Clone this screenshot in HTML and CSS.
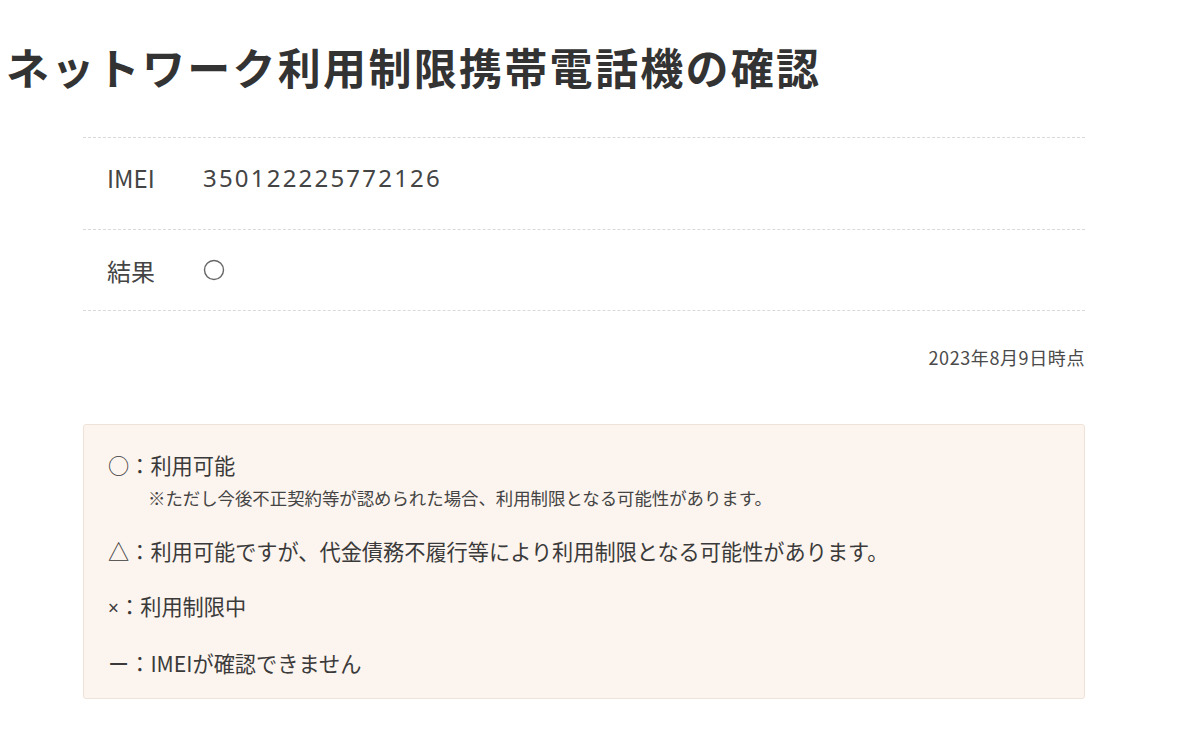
FILE: index.html
```html
<!DOCTYPE html>
<html lang="ja">
<head>
<meta charset="utf-8">
<title>ネットワーク利用制限携帯電話機の確認</title>
<link rel="stylesheet" href="styles.css">
</head>
<body>
<h1 class="title">ネットワーク利用制限携帯電話機の確認</h1>
<div class="content">
  <div class="table">
    <div class="row row-imei">
      <div class="label">IMEI</div>
      <div class="value num">350122225772126</div>
    </div>
    <div class="row row-result">
      <div class="label">結果</div>
      <div class="value">
        <svg class="circle" width="22" height="22" viewBox="0 0 22 22"><circle cx="11" cy="11" r="9.5" fill="none" stroke="#666" stroke-width="1.4"/></svg>
      </div>
    </div>
  </div>
  <div class="date">2023年8月9日時点</div>
  <div class="legend">
    <div class="item">
      <p class="main">○：利用可能</p>
      <p class="note">※ただし今後不正契約等が認められた場合、利用制限となる可能性があります。</p>
    </div>
    <p class="main">△：利用可能ですが、代金債務不履行等により利用制限となる可能性があります。</p>
    <p class="main"><span class="x">×</span>：利用制限中</p>
    <p class="main">ー：IMEIが確認できません</p>
  </div>
</div>
</body>
</html>
```
FILE: styles.css
```css
html, body {
  margin: 0;
  padding: 0;
  background: #ffffff;
}
body {
  font-family: "Noto Sans CJK JP", "Noto Sans", sans-serif;
  color: #3a3a3a;
}
.title {
  margin: 0;
  padding: 39px 0 0 6px;
  font-size: 43px;
  line-height: 54px;
  font-weight: 700;
  color: #333333;
  letter-spacing: 2.3px;
}
.content {
  margin: 44px 0 0 83px;
  width: 1002px;
}
.table {
  border-top: 1px dashed #d9d9d9;
}
.row {
  display: flex;
  align-items: center;
  padding-left: 24px;
  border-bottom: 1px dashed #d9d9d9;
  font-size: 24px;
  color: #444444;
}
.row-imei {
  height: 92px;
  padding-bottom: 12px;
  box-sizing: border-box;
}
.row-result {
  height: 81px;
  box-sizing: border-box;
  padding-top: 0;
}
.label {
  width: 96px;
}
.num {
  letter-spacing: 2.2px;
  font-family: "Noto Sans", sans-serif;
  font-size: 24px;
}
.circle {
  display: block;
}
.date {
  text-align: right;
  font-size: 18px;
  letter-spacing: 0.6px;
  color: #4a4a4a;
  margin-top: 34px;
  line-height: 24px;
}
.legend {
  margin-top: 55px;
  background: #fcf4ee;
  border: 1px solid #efe2d8;
  border-radius: 3px;
  padding: 25px 24px 22px;
  box-sizing: border-box;
  height: 275px;
  display: flex;
  flex-direction: column;
  gap: 25px;
}
.legend p {
  margin: 0;
}
.main {
  font-size: 21.2px;
  line-height: 30px;
  color: #3a3a3a;
}
.x {
  font-family: "Noto Sans", sans-serif;
  font-size: 19px;
  display: inline-block;
  width: 11px;
}
.note {
  font-size: 17.4px;
  line-height: 26px;
  padding-left: 40px;
  margin-top: 5px !important;
  color: #444444;
}
```
